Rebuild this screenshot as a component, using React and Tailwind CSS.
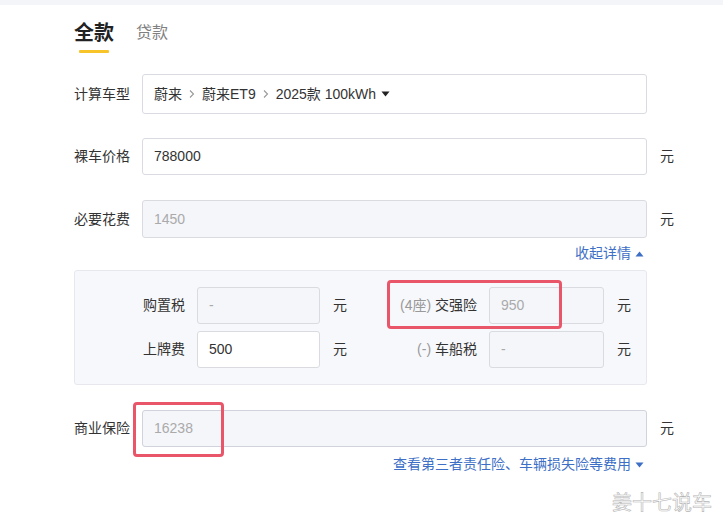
import React from "react";

const font = { fontFamily: '"Liberation Sans", "Noto Sans CJK SC", sans-serif' };

function Unit() {
  return <span className="ml-[13px] text-[14px] text-[#333]">元</span>;
}

function Chevron() {
  return (
    <svg className="mx-[6px]" width="8" height="10" viewBox="0 0 8 10">
      <path d="M2 1.5 L5.5 5 L2 8.5" fill="none" stroke="#999" strokeWidth="1.1" />
    </svg>
  );
}

function Tri({ up, color, className }) {
  return (
    <svg className={className} width="9" height="6" viewBox="0 0 9 6">
      {up ? <path d="M0.5 5.5 L4.5 0.5 L8.5 5.5 Z" fill={color} /> : <path d="M0.5 0.5 L4.5 5.5 L8.5 0.5 Z" fill={color} />}
    </svg>
  );
}

export default function App() {
  return (
    <div className="relative w-[723px] h-[523px] bg-white overflow-hidden" style={font}>
      <div className="h-[5px] bg-[#f4f5f9]" />
      <div className="pl-[74px]">
        {/* Tabs */}
        <div className="flex items-end h-[42px] gap-[22px]">
          <span className="text-[20px] font-bold text-[#222] leading-[28px]">全款</span>
          <span className="text-[16px] text-[#808080] leading-[26px] pb-[1px]">贷款</span>
        </div>
        <div className="mt-[3px] ml-[5px] w-[30px] h-[3px] bg-[#f7c52a] rounded-[1px]" />

        {/* 计算车型 */}
        <div className="mt-[21px] flex items-center">
          <span className="w-[56px] text-[14px] text-[#333] text-right">计算车型</span>
          <div className="ml-[12px] w-[505px] h-[40px] border border-[#d9dbe0] rounded-[3px] flex items-center pl-[11px] text-[14px] text-[#333]">
            <span>蔚来</span>
            <Chevron />
            <span>蔚来ET9</span>
            <Chevron />
            <span>2025款 100kWh</span>
            <Tri color="#222" className="ml-[5px]" />
          </div>
        </div>

        {/* 裸车价格 */}
        <div className="mt-[24px] flex items-center">
          <span className="w-[56px] text-[14px] text-[#333] text-right">裸车价格</span>
          <div className="ml-[12px] w-[505px] h-[37px] border border-[#d9dbe0] rounded-[3px] flex items-center pl-[11px] text-[14px] text-[#333] bg-white">788000</div>
          <Unit />
        </div>

        {/* 必要花费 */}
        <div className="mt-[25px] flex items-center">
          <span className="w-[56px] text-[14px] text-[#333] text-right">必要花费</span>
          <div className="ml-[12px] w-[505px] h-[38px] border border-[#d9dbe0] rounded-[3px] flex items-center pl-[11px] text-[14px] text-[#aaa] bg-[#f5f6fa]">1450</div>
          <Unit />
        </div>

        <div className="w-[573px] flex justify-end items-center mt-[7px] h-[17px] text-[14px] text-[#3d6fc6]">
          <span>收起详情</span>
          <Tri up color="#3d6fc6" className="ml-[4px] mr-[3px]" />
        </div>

        {/* Detail box */}
        <div className="mt-[8px] w-[573px] h-[115px] bg-[#f7f8fb] border border-[#e6e8ee] rounded-[3px] pt-[16px]">
          <div className="flex items-center">
            <span className="w-[110px] text-right text-[14px] text-[#333]">购置税</span>
            <div className="ml-[12px] w-[123px] h-[37px] border border-[#d9dbe0] rounded-[3px] bg-[#f5f6fa] flex items-center pl-[11px] text-[14px] text-[#aaa]">-</div>
            <Unit />
            <span className="w-[130px] text-right text-[14px] text-[#333]"><span className="text-[#999]">(4座)</span> 交强险</span>
            <div className="ml-[12px] w-[115px] h-[37px] border border-[#d9dbe0] rounded-[3px] bg-[#f5f6fa] flex items-center pl-[11px] text-[14px] text-[#aaa]">950</div>
            <Unit />
          </div>
          <div className="flex items-center mt-[7px]">
            <span className="w-[110px] text-right text-[14px] text-[#333]">上牌费</span>
            <div className="ml-[12px] w-[123px] h-[37px] border border-[#d9dbe0] rounded-[3px] bg-white flex items-center pl-[11px] text-[14px] text-[#333]">500</div>
            <Unit />
            <span className="w-[130px] text-right text-[14px] text-[#333]"><span className="text-[#999]">(-)</span> 车船税</span>
            <div className="ml-[12px] w-[115px] h-[37px] border border-[#d9dbe0] rounded-[3px] bg-[#f5f6fa] flex items-center pl-[11px] text-[14px] text-[#aaa]">-</div>
            <Unit />
          </div>
        </div>

        {/* 商业保险 */}
        <div className="mt-[25px] flex items-center">
          <span className="w-[56px] text-[14px] text-[#333] text-right">商业保险</span>
          <div className="ml-[12px] w-[505px] h-[37px] border border-[#d0d3dc] rounded-[3px] flex items-center pl-[11px] text-[14px] text-[#aaa] bg-[#f5f6fa]">16238</div>
          <Unit />
        </div>

        <div className="w-[573px] flex justify-end items-center mt-[9px] h-[17px] text-[14px] text-[#3d6fc6]">
          <span>查看第三者责任险、车辆损失险等费用</span>
          <Tri color="#3d6fc6" className="ml-[4px] mr-[3px]" />
        </div>
      </div>

      {/* Red highlight boxes */}
      <div className="absolute left-[387px] top-[280px] w-[175px] h-[49px] border-[3px] border-[#e9566a] rounded-[4px]" />
      <div className="absolute left-[133px] top-[402px] w-[91px] h-[55px] border-[3px] border-[#e9566a] rounded-[4px]" />

      {/* Watermark */}
      <div className="absolute left-[612px] top-[487px] text-[20px] text-white [-webkit-text-stroke:0.6px_#b5b5b5]" style={{ fontFamily: '"Noto Sans CJK SC", sans-serif' }}>姜十七说车</div>
    </div>
  );
}
